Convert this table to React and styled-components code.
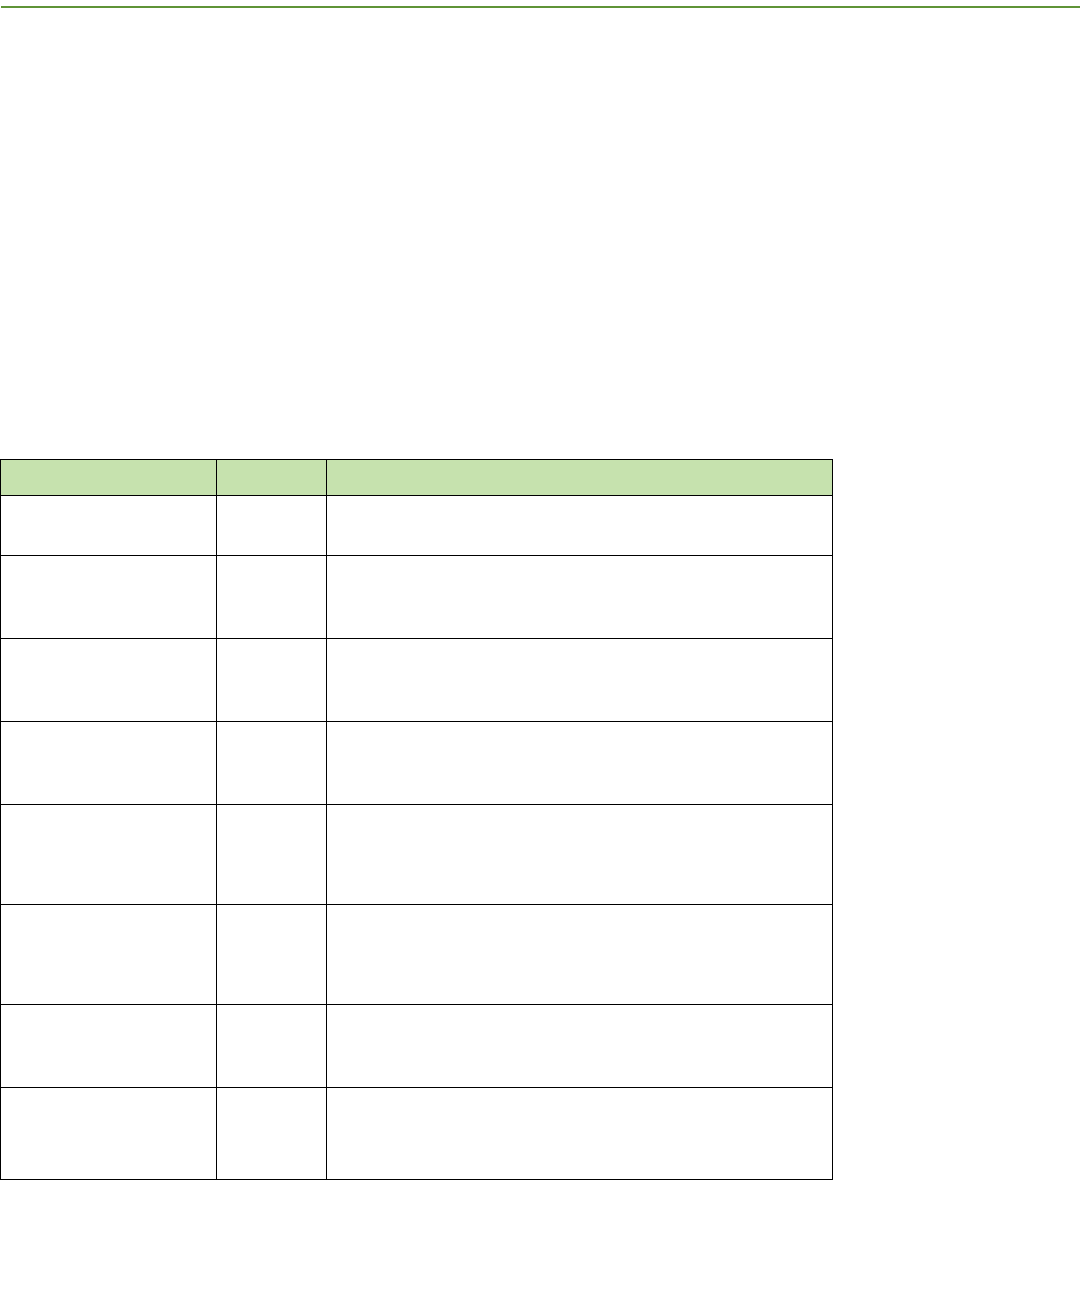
import React from "react";
import styled, {createGlobalStyle} from "styled-components";

const GlobalStyle = createGlobalStyle`
    html, body {
        margin: 0;
        padding: 0;
        background: #ffffff;
        font-family: "Liberation Sans", Arial, sans-serif;
    }
`

const Page = styled.div`
    width: 1080px;
    min-height: 1314px;
    padding-top: 6px;
    box-sizing: border-box;
`

const Rule = styled.div`
    height: 2px;
    margin-left: 1px;
    background-color: #5f9437;
`

const Table = styled.table`
    margin-top: 451px;
    border-collapse: collapse;
    table-layout: fixed;
    width: 832px;
`

const HeadCell = styled.th`
    height: ${({h}) => h}px;
    padding: 0;
    border: 1px solid #000;
    background-color: #c6e2ae;
    box-sizing: border-box;
`

const Cell = styled.td`
    height: ${({h}) => h}px;
    padding: 0;
    border: 1px solid #000;
    box-sizing: border-box;
`

const columns = [216, 110, 506];
const rowHeights = [60, 83, 83, 83, 100, 100, 83, 92];

export default function App() {
    return (
        <>
            <GlobalStyle/>
            <Page>
                <Rule/>
                <Table>
                    <colgroup>
                        {columns.map((w, i) => <col key={i} style={{width: w}}/>)}
                    </colgroup>
                    <thead>
                        <tr>
                            {columns.map((_, i) => <HeadCell key={i} h={36}/>)}
                        </tr>
                    </thead>
                    <tbody>
                        {rowHeights.map((h, r) => (
                            <tr key={r}>
                                {columns.map((_, i) => <Cell key={i} h={h}/>)}
                            </tr>
                        ))}
                    </tbody>
                </Table>
            </Page>
        </>
    )
}
